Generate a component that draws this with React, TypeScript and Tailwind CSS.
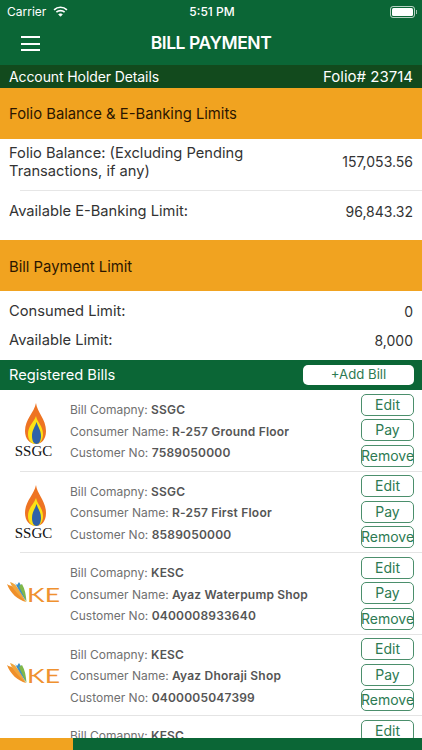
import React from 'react';

type Bill = { logo: 'ssgc' | 'ke'; company: string; name: string; no: string };

const bills: Bill[] = [
  { logo: 'ssgc', company: 'SSGC', name: 'R-257 Ground Floor', no: '7589050000' },
  { logo: 'ssgc', company: 'SSGC', name: 'R-257 First Floor', no: '8589050000' },
  { logo: 'ke', company: 'KESC', name: 'Ayaz Waterpump Shop', no: '0400008933640' },
  { logo: 'ke', company: 'KESC', name: 'Ayaz Dhoraji Shop', no: '0400005047399' },
  { logo: 'ke', company: 'KESC', name: 'Ayaz Shop', no: '0400005047400' },
];

const WifiGlyph = () => (
  <svg viewBox="0 0 16 12" className="w-[15px] h-[11px]" fill="none" stroke="white">
    <path d="M1 4.200 C5 0.400 11 0.400 15 4.200" strokeWidth="1.800" />
    <path d="M3.500 6.700 C6 4.400 10 4.400 12.500 6.700" strokeWidth="1.800" />
    <path d="M6 9.200 C7 8.300 9 8.300 10 9.200 L8 11.300 Z" fill="white" strokeWidth="0.800" />
  </svg>
);

const SsgcLogo = () => (
  <svg viewBox="0 0 50 58" className="w-[50px] h-[58px] mt-[1px]">
    <path d="M27 1 C28 10 37 17 37 29 C37 38 32 42 27 42 C21 42 16 37 16 29 C16 17 25 11 27 1 Z" fill="#ee7423" />
    <path d="M27 14 C28 20 34 24 34 32 C34 38 31 42 27 42 C22 42 19 38 19 32 C19 24 25 20 27 14 Z" fill="#fbe216" />
    <path d="M27.500 20 C29 25 32 28 32 34 C32 39 30 42 27.500 42 C25 42 23 39 23 34 C23 28 26 25 27.500 20 Z" fill="#2f62a8" />
    <text x="24.500" y="54" textAnchor="middle" fontSize="15" fontFamily="'Liberation Serif', serif" fill="#111">SSGC</text>
  </svg>
);

const KeLogo = () => (
  <svg viewBox="0 0 54 26" className="w-[54px] h-[26px]">
    <path d="M0 3 C2 5 4 4 6 6 C10 10 15 15 19 21 C11 19 3 12 0 3 Z" fill="#ef8f2a" />
    <path d="M3 1 C6 2 8 3 10 6 C13 10 16 15 19 21 C13 15 6 9 3 1 Z" fill="#f0a63e" />
    <path d="M8 2 L10 4 L12 1 C15 5 17 12 19 20 C15 14 11 8 8 2 Z" fill="#3d8fc4" />
    <path d="M12 5 L15 3 C18 8 19 14 19.500 21 C17 15 14 10 12 5 Z" fill="#7fb84a" />
    <text x="20" y="21" fontSize="19.500" fontFamily="Lato, sans-serif" fill="#ef9130" textLength="33" lengthAdjust="spacingAndGlyphs">KE</text>
  </svg>
);

const ActionButton = ({ label }: { label: string }) => (
  <button className="w-[53px] h-[22px] rounded-[5px] border border-[#4b8f6c] bg-white text-[#2c7a52] text-[14px] leading-none flex items-center justify-center">
    {label}
  </button>
);

const BillRow = ({ bill }: { bill: Bill }) => (
  <div className="relative h-[81.500px] shrink-0 flex items-center pl-[7px] pr-[8px]">
    <div className="w-[54px] flex justify-center shrink-0">
      {bill.logo === 'ssgc' ? <SsgcLogo /> : <KeLogo />}
    </div>
    <div className="ml-[9px] flex-1 flex flex-col gap-[3px] text-[12px] leading-[18.500px] text-[#707070] pt-[2px]">
      <div>Bill Comapny: <span className="font-semibold text-[#555] tracking-[0.2px]">{bill.company}</span></div>
      <div>Consumer Name: <span className="font-semibold text-[#555] tracking-[0.2px]">{bill.name}</span></div>
      <div>Customer No: <span className="font-semibold text-[#555] tracking-[0.2px]">{bill.no}</span></div>
    </div>
    <div className="flex flex-col gap-[3.500px] pb-[1px]">
      <ActionButton label="Edit" />
      <ActionButton label="Pay" />
      <ActionButton label="Remove" />
    </div>
    <div className="absolute left-[20px] right-0 bottom-0 h-px bg-[#e4e4e4]" />
  </div>
);

export default function App() {
  return (
    <div className="w-[422px] h-[750px] flex flex-col overflow-hidden bg-white font-['Inter','Liberation_Sans',sans-serif] text-black">
      {/* Status bar + nav */}
      <div className="bg-[#0b6636] text-white h-[65px] shrink-0">
        <div className="h-[22px] pt-[1px] flex items-center justify-between pl-[7px] pr-[5px] text-[12px]">
          <div className="flex items-center gap-[7px] w-[120px]">
            <span>Carrier</span>
            <WifiGlyph />
          </div>
          <span className="font-medium">5:51 PM</span>
          <div className="w-[120px] flex justify-end items-center">
            <div className="w-[25px] h-[12px] rounded-[3px] border border-white/70 p-[1px]">
              <div className="w-full h-full rounded-[1.500px] bg-white" />
            </div>
            <div className="w-[1.500px] h-[4px] bg-white/60 ml-[1px]" />
          </div>
        </div>
        <div className="relative h-[43px] flex items-center justify-center">
          <div className="absolute left-[21px] top-[14px] w-[19px] flex flex-col gap-[4.500px]">
            <div className="h-[2px] bg-white" />
            <div className="h-[2px] bg-white" />
            <div className="h-[2px] bg-white" />
          </div>
          <h1 className="text-[17.500px] font-semibold tracking-tight">BILL PAYMENT</h1>
        </div>
      </div>

      {/* Account holder */}
      <div className="h-[23px] shrink-0 bg-[#124a1d] text-white flex items-baseline justify-between px-[9px] leading-[23px]">
        <span className="text-[14px] tracking-[-0.1px]">Account Holder Details</span>
        <span className="text-[15px]">Folio# 23714</span>
      </div>

      <div className="h-[51px] pt-[2px] shrink-0 bg-[#f1a320] flex items-center px-[9px] text-[14.800px] text-[#2b1600]">
        Folio Balance &amp; E-Banking Limits
      </div>

      <div className="h-[101px] shrink-0 text-[14.700px] text-[#333]">
        <div className="h-[51px] pb-[5px] flex items-center justify-between px-[9px] leading-[18px]">
          <span className="w-[270px]">Folio Balance: (Excluding Pending Transactions, if any)</span>
          <span className="text-[14px]">157,053.56</span>
        </div>
        <div className="h-px ml-[20px] bg-[#e6e6e6]" />
        <div className="h-[41px] flex items-center justify-between px-[9px]">
          <span>Available E-Banking Limit:</span>
          <span className="text-[14px]">96,843.32</span>
        </div>
      </div>

      <div className="h-[51px] pt-[3px] shrink-0 bg-[#f1a320] flex items-center px-[9px] text-[14.800px] text-[#2b1600]">
        Bill Payment Limit
      </div>

      <div className="h-[69px] shrink-0 flex flex-col justify-center gap-[10px] px-[9px] text-[14.700px] text-[#333] leading-[19px] pt-[1px]">
        <div className="flex justify-between">
          <span>Consumed Limit:</span>
          <span className="text-[14px]">0</span>
        </div>
        <div className="flex justify-between">
          <span>Available Limit:</span>
          <span className="text-[14px]">8,000</span>
        </div>
      </div>

      {/* Registered bills */}
      <div className="h-[30px] shrink-0 bg-[#0b6636] flex items-center justify-between pl-[9px] pr-[8px] text-white text-[14.700px]">
        <span>Registered Bills</span>
        <button className="w-[111px] h-[20px] rounded-[5px] bg-white text-[#2c7a52] text-[13.200px] leading-none flex items-center justify-center">
          +Add Bill
        </button>
      </div>

      <div className="flex-1 min-h-0 overflow-hidden flex flex-col">
        {bills.map((bill) => (
          <BillRow key={bill.no} bill={bill} />
        ))}
      </div>

      {/* Progress strip */}
      <div className="h-[12px] shrink-0 flex">
        <div className="w-[73px] bg-[#f1a320]" />
        <div className="flex-1 bg-[#0b6636]" />
      </div>
    </div>
  );
}
